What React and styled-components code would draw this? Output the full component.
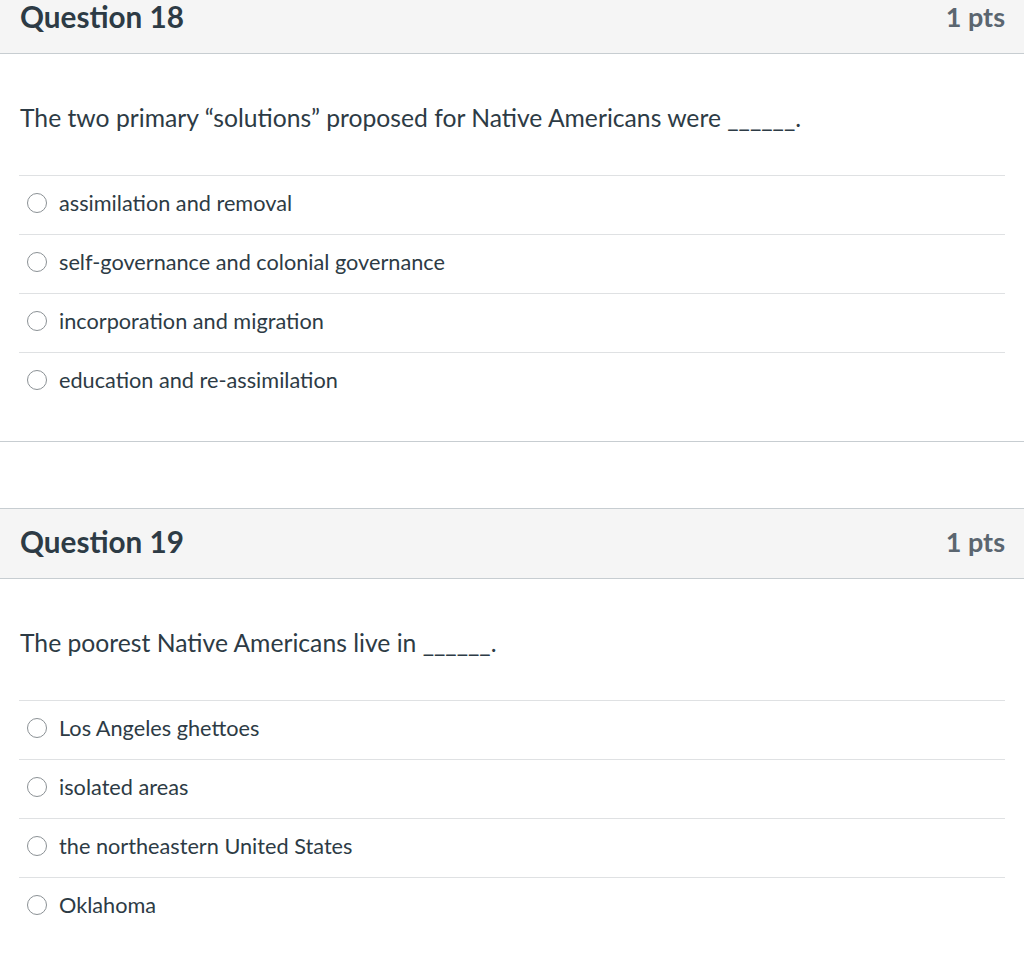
import React from "react";
import styled, { createGlobalStyle } from "styled-components";

const GlobalStyle = createGlobalStyle`
  html, body { margin: 0; padding: 0; background: #fff; }
  body { font-family: Lato, "Open Sans", "Liberation Sans", sans-serif; color: #2d3b45; }
`;

const Page = styled.div`
  margin-top: -17px;
`;

const Block = styled.section`
  border-bottom: 1px solid #c7cdd1;
  margin-bottom: 66px;
`;

const Header = styled.div`
  display: flex;
  align-items: center;
  justify-content: space-between;
  height: 71px;
  padding: 0 19px 3px 20px;
  box-sizing: border-box;
  background: #f5f5f5;
  border-top: 1px solid #c7cdd1;
  border-bottom: 1px solid #c7cdd1;
`;

const Title = styled.h2`
  margin: 0;
  font-size: 29.7px;
  line-height: 36px;
  font-weight: 700;
  color: #2d3b45;
`;

const Points = styled.span`
  font-size: 27px;
  line-height: 36px;
  font-weight: 700;
  color: #5b6670;
`;

const Body = styled.div`
  padding: 0 19px 30px 19px;
`;

const QuestionText = styled.p`
  margin: 0;
  padding: 47px 1px 40px;
  font-size: 24.7px;
  line-height: 34px;
  color: #2d3b45;
`;

const AnswerList = styled.div`
  border-top: 1px solid #dfe1e3;
`;

const Answer = styled.label`
  display: flex;
  align-items: center;
  gap: 12px;
  height: 58px;
  box-sizing: border-box;
  padding: 0 0 5px 8px;
  font-size: 21.7px;
  line-height: 28px;
  color: #2d3b45;
  & + & {
    height: 59px;
    border-top: 1px solid #dfe1e3;
  }
`;

const Radio = styled.span`
  width: 18px;
  height: 18px;
  border: 1px solid #8b9195;
  border-radius: 50%;
  background: #fff;
  flex: none;
`;

const questions = [
  {
    n: 18,
    text: "The two primary “solutions” proposed for Native Americans were ______.",
    answers: [
      "assimilation and removal",
      "self-governance and colonial governance",
      "incorporation and migration",
      "education and re-assimilation",
    ],
  },
  {
    n: 19,
    text: "The poorest Native Americans live in ______.",
    answers: [
      "Los Angeles ghettoes",
      "isolated areas",
      "the northeastern United States",
      "Oklahoma",
    ],
  },
];

export default function App() {
  return (
    <>
      <GlobalStyle />
      <Page>
        {questions.map((q) => (
          <Block key={q.n}>
            <Header>
              <Title>Question {q.n}</Title>
              <Points>1 pts</Points>
            </Header>
            <Body>
              <QuestionText>{q.text}</QuestionText>
              <AnswerList>
                {q.answers.map((a) => (
                  <Answer key={a}>
                    <Radio />
                    {a}
                  </Answer>
                ))}
              </AnswerList>
            </Body>
          </Block>
        ))}
      </Page>
    </>
  );
}
